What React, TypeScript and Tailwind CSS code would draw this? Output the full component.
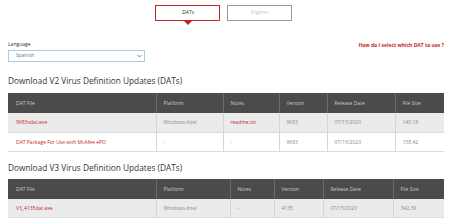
import React from "react";

type Row = { file: string; link?: boolean; platform: string; notes: string; notesLink?: boolean; version: string; date: string; size: string };

const cols = ["DAT File", "Platform", "Notes", "Version", "Release Date", "File Size"];

function DatTable({ widths, rows }: { widths: number[]; rows: Row[] }) {
  return (
    <table className="w-[436px] border-collapse table-fixed text-[5px] leading-[6px]">
      <colgroup>
        {widths.map((w, i) => (
          <col key={i} style={{ width: w }} />
        ))}
      </colgroup>
      <thead>
        <tr className="bg-[#4b4b4c] h-[20px]">
          {cols.map((c, i) => (
            <th
              key={c}
              className={`text-left font-normal text-[#c9c9c9] ${i === 0 ? "pl-[8px]" : "pl-[7px] border-l border-[#6a6a6a]"}`}
            >
              {c}
            </th>
          ))}
        </tr>
      </thead>
      <tbody>
        {rows.map((r, ri) => (
          <tr key={ri} className={`h-[19px] border-b border-[#dcdcdc] ${ri % 2 === 0 ? "bg-[#ebebeb]" : "bg-white"}`}>
            <td className={`pl-[8px] ${r.link ? "text-[#c4262b]" : "text-[#8a8a8a]"}`}>{r.file}</td>
            <td className="pl-[7px] border-l border-[#d6d6d6] text-[#8a8a8a]">{r.platform}</td>
            <td className={`pl-[7px] border-l border-[#d6d6d6] ${r.notesLink ? "text-[#c4262b]" : "text-[#8a8a8a]"}`}>{r.notes}</td>
            <td className="pl-[7px] border-l border-[#d6d6d6] text-[#8a8a8a]">{r.version}</td>
            <td className="pl-[7px] border-l border-[#d6d6d6] text-[#8a8a8a]">{r.date}</td>
            <td className="pl-[7px] border-l border-[#d6d6d6] text-[#8a8a8a]">{r.size}</td>
          </tr>
        ))}
      </tbody>
    </table>
  );
}

export default function App() {
  return (
    <div className="w-[450px] h-[222px] overflow-hidden bg-white pl-[8px] pr-[6px]" style={{ fontFamily: '"Open Sans", "Liberation Sans", sans-serif' }}>
      <div className="flex gap-[7px] pt-[5px] pl-[147px]">
        <div className="relative w-[65px] h-[16px] border-[1.5px] border-[#c4262b] flex items-center justify-center text-[5px] text-[#333]">
          .DATs
          <div className="absolute left-1/2 -translate-x-1/2 top-[14.5px] w-0 h-0 border-l-[4px] border-r-[4px] border-t-[4px] border-l-transparent border-r-transparent border-t-[#c4262b]" />
        </div>
        <div className="w-[65px] h-[16px] border-[1.5px] border-[#9a9a9a] flex items-center justify-center text-[5px] text-[#c8c8c8]">
          Engines
        </div>
      </div>

      <div className="flex items-start justify-between mt-[20px]">
        <div className="flex flex-col">
          <div className="text-[5px] leading-[6px] text-[#333]">Language</div>
          <div className="mt-[3px] w-[137px] h-[12px] border border-[#a9cbe6] flex items-center justify-between pl-[7px] pr-[2px] text-[5px] text-[#777]">
            <span>Spanish</span>
            <svg width="5" height="4" viewBox="0 0 10 8">
              <path d="M1 2 L5 6 L9 2" fill="none" stroke="#666" strokeWidth="1.6" />
            </svg>
          </div>
        </div>
        <div className="mt-[1px] text-[5px] leading-[6px] font-bold text-[#c4262b]">How do I select which DAT to use ?</div>
      </div>

      <div className="mt-[13px] text-[8.3px] leading-[12px] text-[#333]">Download V2 Virus Definition Updates (DATs)</div>
      <div className="mt-[6px]">
        <DatTable
          widths={[148, 67, 56, 48, 68, 49]}
          rows={[
            { file: "9683xdat.exe", link: true, platform: "Windows-Intel", notes: "readme.txt", notesLink: true, version: "9683", date: "07/15/2020", size: "140.18" },
            { file: "DAT Package For Use with McAfee ePO", link: true, platform: "-", notes: "-", version: "9683", date: "07/15/2020", size: "158.42" },
          ]}
        />
      </div>

      <div className="mt-[10px] text-[8.3px] leading-[12px] text-[#333]">Download V3 Virus Definition Updates (DATs)</div>
      <div className="mt-[5px]">
        <DatTable
          widths={[148, 74, 44, 49, 70, 51]}
          rows={[
            { file: "V3_4135dat.exe", link: true, platform: "Windows-Intel", notes: "-", version: "4135", date: "07/15/2020", size: "342.39" },
          ]}
        />
      </div>
    </div>
  );
}
